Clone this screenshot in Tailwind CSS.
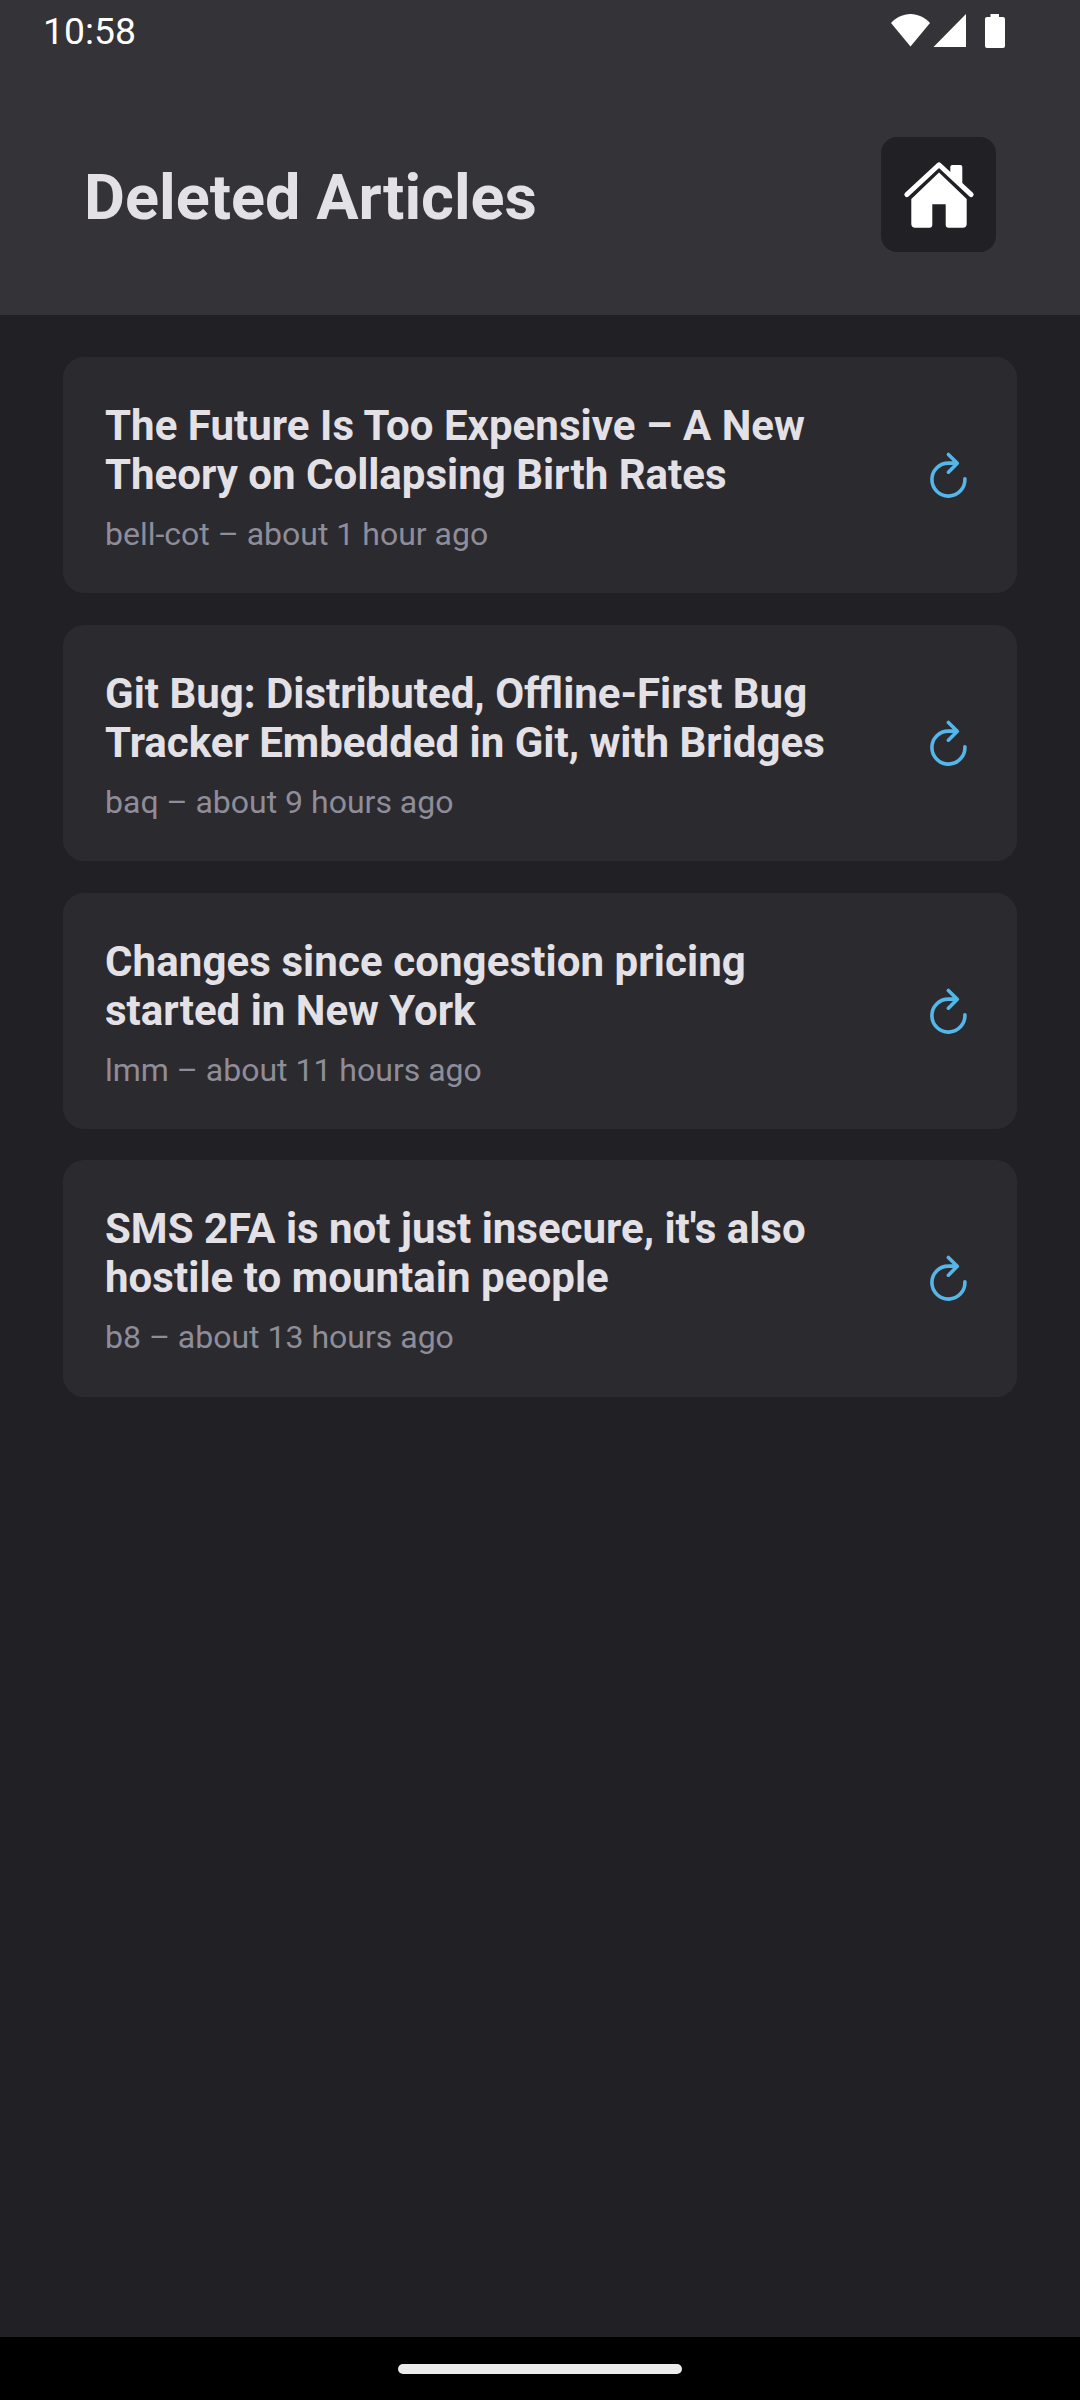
<!DOCTYPE html>
<html lang="en">
<head>
<meta charset="utf-8">
<title>Deleted Articles</title>
<script src="https://cdn.jsdelivr.net/npm/@tailwindcss/browser@4"></script>
</head>
<body class="bg-[#212025] font-[Roboto,sans-serif]">
<svg class="hidden">
  <symbol id="restore" viewBox="0 0 40 50"><path d="M35.900 28.900A16.500 16.500 0 1 1 19.400 13.100H27.500M19.400 4.500l8.900 8.800-8.900 8.900" fill="none" stroke="#55b6e9" stroke-width="3.600" stroke-linecap="round" stroke-linejoin="round"/></symbol>
</svg>
<div class="flex h-[2400px] w-[1080px] flex-col overflow-hidden">
  <header class="flex h-[315px] flex-col bg-[#343338]">
    <div class="flex h-[63px] items-center justify-between pl-[43px] pr-[75px] text-[37.3px] leading-[63px] text-white">
      <span>10:58</span>
      <svg class="h-[63px] w-[114px]" viewBox="891 0 114 63" fill="#fff"><path d="M910.500 46.500 891 23c5-5.500 12-9 19.500-9s14.500 3.500 19.500 9z"/><path d="M933.500 47 966 14v33z"/><path d="M990.500 14h8.500v3h4q2 0 2 2v27q0 2-2 2h-16q-2 0-2-2V19q0-2 2-2h3.500z"/></svg>
    </div>
    <div class="flex items-center justify-between pt-[74px] pl-[84px] pr-[84px]">
      <h1 class="pt-[6px] text-[63px] leading-[74px] font-bold text-[#e3e1e6]">Deleted Articles</h1>
      <button class="flex size-[115px] items-center justify-center rounded-[16px] bg-[#212025]">
        <svg class="size-[115px]" viewBox="0 0 115 115" fill="#fff"><path d="M58 35.600 85.700 62V87q0 3.700-4 3.700H67.500q-2.800 0-2.800-3V67.300H51.300V87.700q0 3-2.800 3H34.300q-4 0-4-3.700V62z"/><path d="M25.800 57.600 58 27.800 90.200 57.600" fill="none" stroke="#fff" stroke-width="4.900" stroke-linecap="round" stroke-linejoin="round"/><path d="M69.300 37v-7q0-2 2-2h8q2 0 2 2v19z"/></svg>
      </button>
    </div>
  </header>
  <main class="flex flex-1 flex-col gap-[31.5px] px-[63px] pt-[42px]">
    <article class="flex h-[236.25px] items-center justify-between rounded-[21px] bg-[#2b2a2f] pl-[42px] pr-[48px]">
      <div class="pt-[4px]"><h2 class="text-[42px] leading-[49px] font-bold text-[#e3e1e6]"><span class="tracking-[0.04px]">The Future Is Too Expensive – A New</span><br>Theory on Collapsing Birth Rates</h2>
      <p class="mt-[17px] text-[32px] leading-[37px] text-[#8e8d99]">bell-cot – about 1 hour ago</p></div>
      <svg class="h-[50px] w-[40px]"><use href="#restore"/></svg>
    </article>
    <article class="flex h-[236.25px] items-center justify-between rounded-[21px] bg-[#2b2a2f] pl-[42px] pr-[48px]">
      <div class="pt-[4px]"><h2 class="text-[42px] leading-[49px] font-bold text-[#e3e1e6]">Git Bug: Distributed, Offline-First Bug<br>Tracker Embedded in Git, with Bridges</h2>
      <p class="mt-[17px] text-[32px] leading-[37px] text-[#8e8d99]">baq – about 9 hours ago</p></div>
      <svg class="h-[50px] w-[40px]"><use href="#restore"/></svg>
    </article>
    <article class="flex h-[236.25px] items-center justify-between rounded-[21px] bg-[#2b2a2f] pl-[42px] pr-[48px]">
      <div class="pt-[4px]"><h2 class="text-[42px] leading-[49px] font-bold text-[#e3e1e6]"><span class="tracking-[0.09px]">Changes since congestion pricing</span><br>started in New York</h2>
      <p class="mt-[17px] text-[32px] leading-[37px] text-[#8e8d99]">lmm – about 11 hours ago</p></div>
      <svg class="h-[50px] w-[40px]"><use href="#restore"/></svg>
    </article>
    <article class="flex h-[236.25px] items-center justify-between rounded-[21px] bg-[#2b2a2f] pl-[42px] pr-[48px]">
      <div class="pt-[4px]"><h2 class="text-[42px] leading-[49px] font-bold text-[#e3e1e6]">SMS 2FA is not just insecure, it's also<br><span class="tracking-[0.05px]">hostile to mountain people</span></h2>
      <p class="mt-[17px] text-[32px] leading-[37px] text-[#8e8d99]">b8 – about 13 hours ago</p></div>
      <svg class="h-[50px] w-[40px]"><use href="#restore"/></svg>
    </article>
  </main>
  <footer class="flex h-[63px] items-center justify-center bg-black"><div class="h-[10px] w-[284px] rounded-full bg-[#ebebeb]"></div></footer>
</div>
</body>
</html>
